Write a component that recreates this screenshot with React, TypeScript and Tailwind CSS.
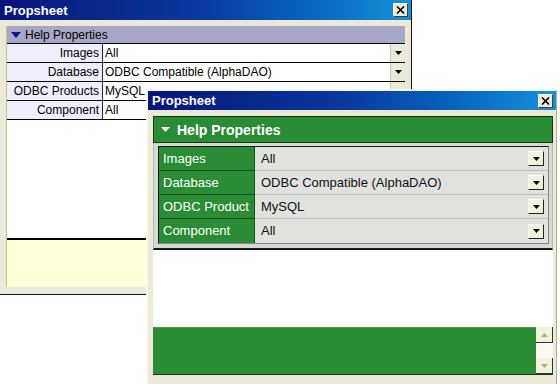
import React from 'react';

const backRows = [
  { label: 'Images', value: 'All' },
  { label: 'Database', value: 'ODBC Compatible (AlphaDAO)' },
  { label: 'ODBC Products', value: 'MySQL' },
  { label: 'Component', value: 'All' },
];

const frontRows = [
  { label: 'Images', value: 'All' },
  { label: 'Database', value: 'ODBC Compatible (AlphaDAO)' },
  { label: 'ODBC Product', value: 'MySQL' },
  { label: 'Component', value: 'All' },
];

const font = { fontFamily: '"Liberation Sans", Arial, sans-serif' };

function CloseButton() {
  return (
    <div className="w-[15px] h-[14px] bg-[#ece9d8] border-t border-l border-white border-r border-b border-r-[#404040] border-b-[#404040] flex items-center justify-center">
      <svg width="9" height="8" viewBox="0 0 9 8">
        <path d="M1 0.5 L8 7.5 M8 0.5 L1 7.5" stroke="#000" strokeWidth="1.6" />
      </svg>
    </div>
  );
}

function TitleBar({ title }: { title: string }) {
  return (
    <div className="h-full flex items-center justify-between pl-[4px] pr-[3px] bg-gradient-to-r from-[#08137a] via-[#0a3aa0] to-[#1690da]">
      <span className="text-white font-bold text-[13px] leading-none">{title}</span>
      <CloseButton />
    </div>
  );
}

function Arrow({ color = '#000', up = false, w = 7, h = 4 }: { color?: string; up?: boolean; w?: number; h?: number }) {
  return (
    <svg width={w} height={h} viewBox={`0 0 ${w} ${h}`}>
      <path d={up ? `M0 ${h} L${w} ${h} L${w / 2} 0 Z` : `M0 0 L${w} 0 L${w / 2} ${h} Z`} fill={color} />
    </svg>
  );
}

function BackWindow() {
  return (
    <div
      className="absolute left-0 top-0 w-[412px] h-[295px] bg-[#ece9d8] border-r border-b border-[#111] flex flex-col"
      style={font}
    >
      <div className="h-5">
        <TitleBar title="Propsheet" />
      </div>
      <div className="flex-1 flex flex-col px-[6px] pt-[6px] pb-[7px]">
        <div className="flex-1 flex flex-col border-l border-[#c4c488]">
          <div className="h-[18px] bg-[#a6a6c6] flex items-center gap-[4px] pl-[4px] border-b border-black">
            <Arrow color="#0c1a80" w={10} h={6} />
            <span className="text-[12px] text-black leading-none">Help Properties</span>
          </div>
          {backRows.map((r) => (
            <div key={r.label} className="h-[19px] flex border-b border-black">
              <div className="w-[96px] bg-[#eeeefc] border-r border-[#222250] flex items-center justify-end pr-[3px] text-[12px] text-black">
                {r.label}
              </div>
              <div className="flex-1 bg-white flex items-center justify-between pl-[2px] text-[12px] text-black">
                <span>{r.value}</span>
                <div className="w-[15px] h-[18px] bg-[#ece9d8] border-l border-[#c8c8b0] flex items-center justify-center">
                  <Arrow />
                </div>
              </div>
            </div>
          ))}
          <div className="flex-1 bg-white border-b-2 border-black" />
          <div className="h-[47px] bg-[#ffffd8]" />
        </div>
      </div>
    </div>
  );
}

function FrontWindow() {
  return (
    <div
      className="absolute left-[146px] top-[89px] w-[411px] h-[295px] bg-[#ece9d8] border-l-2 border-t-2 border-r border-[#f8f8f0] border-r-[#b0b080] flex flex-col"
      style={font}
    >
      <div className="h-[19px]">
        <TitleBar title="Propsheet" />
      </div>
      <div className="flex-1 flex flex-col pl-[5px] pr-[3px] pt-[6px] pb-[9px]">
        <div className="h-[27px] bg-[#2a8c34] border border-[#103810] flex items-center gap-[7px] pl-[7px]">
          <Arrow color="#fff" w={9} h={5} />
          <span className="text-white font-bold text-[14px] leading-none">Help Properties</span>
        </div>
        <div className="bg-[#d6d8d2] pl-[4px] pr-[3px] pt-[3px] pb-[4px] border-b-2 border-[#1c1c1c] border-x border-x-[#b8bab4]">
          <div className="border border-[#1a1a1a] border-r-[#888] border-b-[#888]">
            {frontRows.map((r, i) => (
              <div key={r.label} className="h-[24px] flex">
                <div
                  className={`w-[96px] bg-[#2a8c34] border-r border-[#155018] flex items-center pl-[4px] text-[13px] text-white ${
                    i < 3 ? 'border-b border-b-[#155018]' : ''
                  }`}
                >
                  {r.label}
                </div>
                <div
                  className={`flex-1 bg-[#e0e2de] flex items-center justify-between pl-[6px] pr-[4px] text-[13px] text-[#111] ${
                    i < 3 ? 'border-b border-b-[#b8c2c4]' : ''
                  }`}
                >
                  <span>{r.value}</span>
                  <div className="w-[16px] h-[15px] bg-[#f2f2dc] border-t border-l border-[#fffff4] border-r border-b border-r-[#222] border-b-[#222] flex items-center justify-center">
                    <Arrow />
                  </div>
                </div>
              </div>
            ))}
          </div>
        </div>
        <div className="flex-1 bg-white" />
        <div className="h-[48px] flex border-b border-[#103810]">
          <div className="flex-1 bg-[#2a8c34] border-t border-[#40a048]" />
          <div className="w-[17px] flex flex-col bg-[#fcfaf0]">
            <div className="h-[16px] bg-[#f2f2dc] border-r border-b border-[#333] flex items-center justify-center">
              <Arrow color="#b0b080" up />
            </div>
            <div className="flex-1" />
            <div className="h-[16px] bg-[#f2f2dc] border-r border-b border-[#333] flex items-center justify-center">
              <Arrow color="#b0b080" />
            </div>
          </div>
        </div>
      </div>
    </div>
  );
}

export default function App() {
  return (
    <div className="relative w-[560px] h-[384px] bg-white overflow-hidden">
      <BackWindow />
      <FrontWindow />
    </div>
  );
}
